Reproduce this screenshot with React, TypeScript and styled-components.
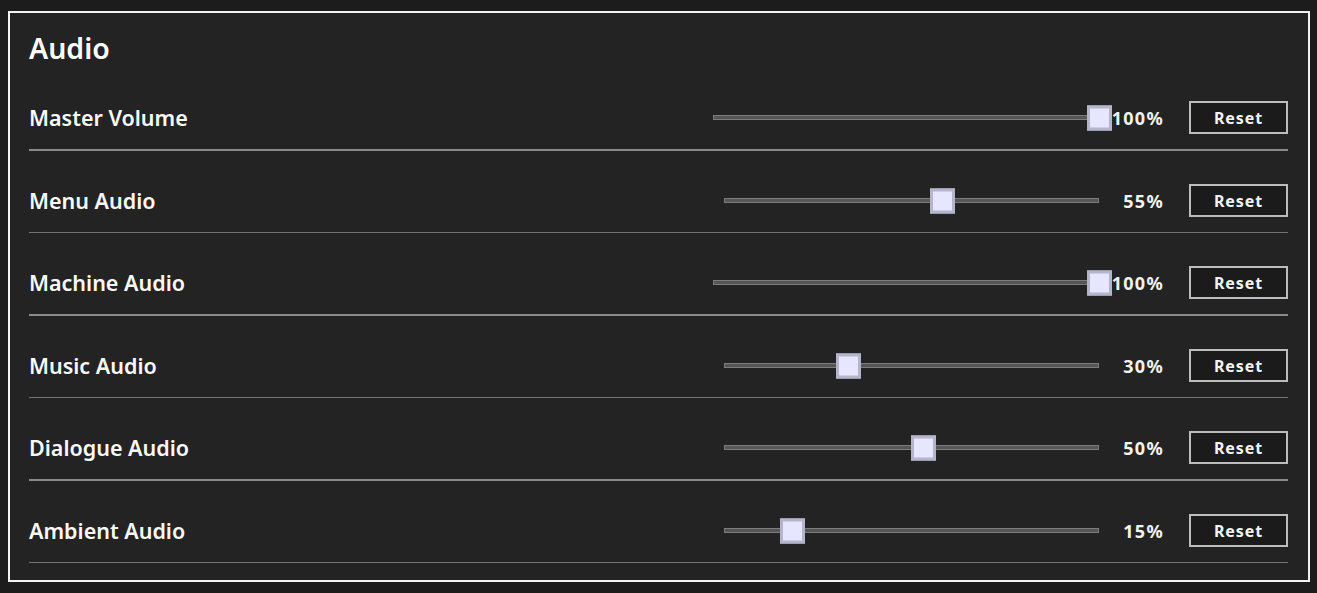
import React from 'react';
import styled, { createGlobalStyle } from 'styled-components';

const GlobalStyle = createGlobalStyle`
  html, body {
    margin: 0;
    background: #1c1c1c;
  }
  body {
    padding: 11px 7px 0 8px;
    font-family: "Noto Sans", "Open Sans", sans-serif;
    color: #f4f4f4;
  }
`;

const Panel = styled.section`
  border: 2px solid #f2f2f2;
  background: #232323;
  padding: 0 20px 17px 19px;
`;

const Title = styled.h1`
  margin: 17px 0 2px 0;
  font-size: 28.5px;
  line-height: 36px;
  font-weight: 600;
  color: #ffffff;
`;

const Row = styled.div<{ $thick: boolean }>`
  display: flex;
  align-items: center;
  padding: 33px 0 15px 0;
  border-bottom: ${p => (p.$thick ? '2px solid #8a8a8a' : '1px solid #737373')};
`;

const Label = styled.div`
  flex: 1;
  font-size: 21.5px;
  font-weight: 600;
  line-height: 33px;
  color: #fafafa;
`;

const Track = styled.div`
  position: relative;
  width: 375px;
  height: 5px;
  box-sizing: border-box;
  border: 1px solid #7c7c7c;
  background: #555555;
  margin-right: 24px;
`;

const Thumb = styled.div`
  position: absolute;
  top: 50%;
  width: 25px;
  height: 25px;
  box-sizing: border-box;
  transform: translateY(-50%);
  border: 3px solid #b4b4cc;
  background: #e6e6fe;
`;

const Percent = styled.div`
  font-size: 18px;
  font-weight: 700;
  letter-spacing: 1.3px;
  color: #f2f2f2;
  margin-right: 25px;
`;

const ResetButton = styled.button`
  width: 99px;
  height: 33px;
  box-sizing: border-box;
  border: 2px solid #bdbdbd;
  background: #1b1b1b;
  color: #f4f4f4;
  font-family: "Noto Sans", "Open Sans", sans-serif;
  font-size: 16px;
  font-weight: 700;
  letter-spacing: 0.9px;
  padding: 0;
  cursor: pointer;
`;

type Setting = { name: string; value: number };

const settings: Setting[] = [
  { name: 'Master Volume', value: 100 },
  { name: 'Menu Audio', value: 55 },
  { name: 'Machine Audio', value: 100 },
  { name: 'Music Audio', value: 30 },
  { name: 'Dialogue Audio', value: 50 },
  { name: 'Ambient Audio', value: 15 },
];

function Slider({ value }: { value: number }) {
  return (
    <Track>
      <Thumb style={{ left: `${(value / 100) * 375 - 2}px` }} />
    </Track>
  );
}

export default function App() {
  return (
    <>
      <GlobalStyle />
      <Panel>
        <Title>Audio</Title>
        {settings.map((s, i) => (
          <Row key={s.name} $thick={i % 2 === 0}>
            <Label>{s.name}</Label>
            <Slider value={s.value} />
            <Percent>{s.value}%</Percent>
            <ResetButton>Reset</ResetButton>
          </Row>
        ))}
      </Panel>
    </>
  );
}
